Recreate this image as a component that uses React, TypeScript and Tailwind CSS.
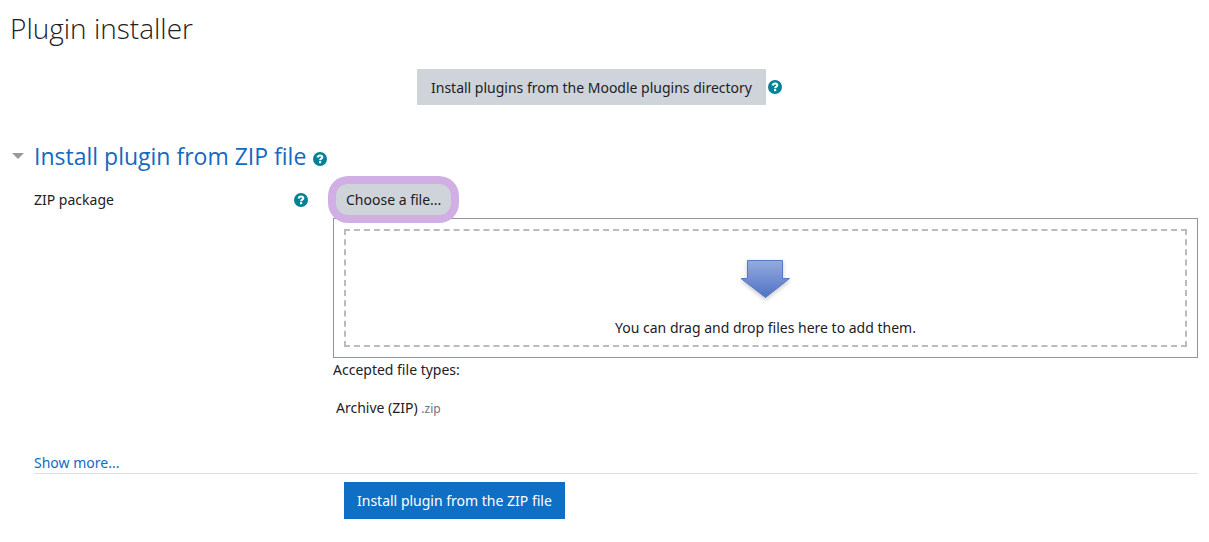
import React from 'react';

interface HelpButtonProps {
  label: string;
}

const HelpButton: React.FC<HelpButtonProps> = ({ label }) => {
  return (
    <button type="button" aria-label={label} className="flex size-3.5 shrink-0 cursor-pointer">
      <svg viewBox="0 0 14 14" className="size-full">
        <circle cx="7" cy="7" r="7" fill="#008196" />
        <path
          d="M4.6 5.4C4.9 4.1 5.8 3.5 7 3.5c1.4 0 2.3.7 2.3 1.8 0 1.5-2.2 1.4-2.2 3"
          fill="none"
          stroke="#fff"
          strokeWidth="2.1"
        />
        <rect x="6" y="9.1" width="2.2" height="2.1" fill="#fff" />
      </svg>
    </button>
  );
};

const DropArrow: React.FC = () => {
  return (
    <svg viewBox="0 0 60 50" className="h-[50px] w-[60px]" aria-hidden="true">
      <defs>
        <linearGradient id="arrowFill" x1="0" y1="0" x2="0" y2="1">
          <stop offset="0" stopColor="#94abdd" />
          <stop offset="1" stopColor="#5072c4" />
        </linearGradient>
        <filter id="arrowShadow" x="-20%" y="-20%" width="140%" height="150%">
          <feDropShadow dx="0" dy="2" stdDeviation="2" floodColor="#000" floodOpacity="0.22" />
        </filter>
      </defs>
      <path
        d="M11.5 5.5h35v18h7L29.5 42.5 5 23.5h6.5z"
        fill="url(#arrowFill)"
        stroke="#557ac8"
        filter="url(#arrowShadow)"
      />
    </svg>
  );
};

export default function App() {
  return (
    <main className="bg-white px-2.5 pt-[7px] pb-6 font-['Noto_Sans','Open_Sans',sans-serif] text-[14px] leading-6 text-[#1d2125]">
      <h1 className="font-['Open_Sans','Noto_Sans',sans-serif] text-[28px] leading-[42px] font-light">
        Plugin installer
      </h1>

      {/* Plugins directory */}
      <div className="mt-5 flex items-center justify-center gap-0.5 pr-2.5">
        <button type="button" className="h-9 cursor-pointer bg-[#ced4da] px-3.5 pt-0.5">
          Install plugins from the Moodle plugins directory
        </button>
        <HelpButton label="Help with Install plugins" />
      </div>

      <form className="mt-[35px] pr-px pl-6">
        {/* Section heading */}
        <div className="-ml-[22px] flex items-center">
          <button type="button" aria-label="Collapse section" className="w-[22px] cursor-pointer">
            <svg viewBox="0 0 12 6" className="h-1.5 w-3">
              <path d="M0 0h12L6 6z" fill="#999" />
            </svg>
          </button>
          <h2 className="font-['Open_Sans','Noto_Sans',sans-serif] text-[23px] leading-8 text-[#1469c0]">
            Install plugin from ZIP file
          </h2>
          <div className="mt-1.5 ml-[7px]">
            <HelpButton label="Help with Install plugin from ZIP file" />
          </div>
        </div>

        {/* ZIP package */}
        <div className="mt-3 flex">
          <div className="flex w-1/4 items-center justify-between self-start pt-1 pr-[17px]">
            <label htmlFor="zipfile">ZIP package</label>
            <HelpButton label="Help with ZIP package" />
          </div>
          <div className="w-3/4 pl-2">
            <button
              type="button"
              id="zipfile"
              className="relative z-10 ml-[3px] block h-[31px] cursor-pointer rounded-xl bg-[#ced4da] px-2.5 shadow-[0_0_0_8px_#d1afe4]"
            >
              Choose a file...
            </button>
            <div className="mt-[3px] border border-[#8f959e] p-2.5">
              <div className="flex h-[118px] flex-col items-center border-2 border-dashed border-[#bbb] pt-6">
                <DropArrow />
                <p className="mt-[11px]">You can drag and drop files here to add them.</p>
              </div>
            </div>
            <p>Accepted file types:</p>
            <ul className="mt-3.5 pl-[3px]">
              <li>
                Archive (ZIP) <small className="text-[12px] text-[#6a737b]">.zip</small>
              </li>
            </ul>
          </div>
        </div>

        <div className="mt-[31px] border-b border-[#dee2e6]">
          <a href="#" className="block w-fit leading-[21px] text-[#0f6cbf]">
            Show more...
          </a>
        </div>

        <div className="mt-2 flex">
          <div className="w-1/4" />
          <div className="pl-[19px]">
            <button type="submit" className="h-[37px] cursor-pointer bg-[#0f6fc5] px-[13px] text-white">
              Install plugin from the ZIP file
            </button>
          </div>
        </div>
      </form>
    </main>
  );
}
